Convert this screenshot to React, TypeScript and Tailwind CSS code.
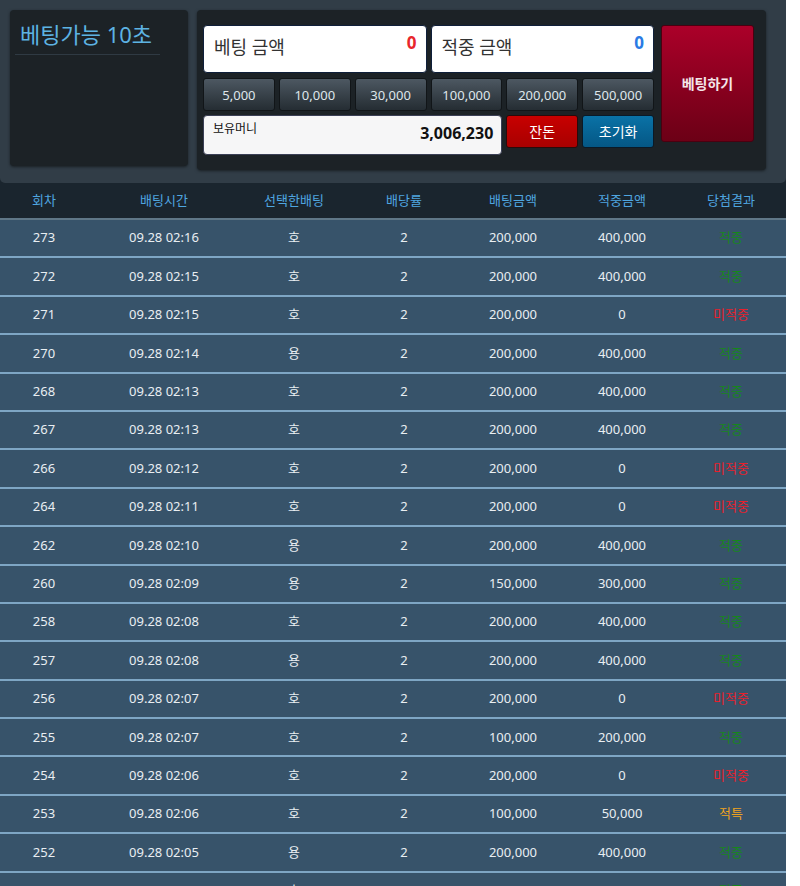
import React from 'react';

const rows: [string, string, string, string, string, string][] = [
  ['273', '09.28 02:16', '호', '200,000', '400,000', '적중'],
  ['272', '09.28 02:15', '호', '200,000', '400,000', '적중'],
  ['271', '09.28 02:15', '호', '200,000', '0', '미적중'],
  ['270', '09.28 02:14', '용', '200,000', '400,000', '적중'],
  ['268', '09.28 02:13', '호', '200,000', '400,000', '적중'],
  ['267', '09.28 02:13', '호', '200,000', '400,000', '적중'],
  ['266', '09.28 02:12', '호', '200,000', '0', '미적중'],
  ['264', '09.28 02:11', '호', '200,000', '0', '미적중'],
  ['262', '09.28 02:10', '용', '200,000', '400,000', '적중'],
  ['260', '09.28 02:09', '용', '150,000', '300,000', '적중'],
  ['258', '09.28 02:08', '호', '200,000', '400,000', '적중'],
  ['257', '09.28 02:08', '용', '200,000', '400,000', '적중'],
  ['256', '09.28 02:07', '호', '200,000', '0', '미적중'],
  ['255', '09.28 02:07', '호', '100,000', '200,000', '적중'],
  ['254', '09.28 02:06', '호', '200,000', '0', '미적중'],
  ['253', '09.28 02:06', '호', '100,000', '50,000', '적특'],
  ['252', '09.28 02:05', '용', '200,000', '400,000', '적중'],
  ['251', '09.28 02:05', '호', '200,000', '400,000', '적중'],
];

const chips = ['5,000', '10,000', '30,000', '100,000', '200,000', '500,000'];

const headers = ['회차', '배팅시간', '선택한배팅', '배당률', '배팅금액', '적중금액', '당첨결과'];
const widths = ['w-[88px]', 'w-[152px]', 'w-[108px]', 'w-[112px]', 'w-[106px]', 'w-[112px]', 'w-[106px]'];

const resultColor = (r: string) =>
  r === '적중' ? 'text-[#17861c]' : r === '미적중' ? 'text-[#e8202c]' : 'text-[#f0a41c]';

export default function App() {
  return (
    <div
      className="w-[786px] bg-[#1a252e] text-[13px] text-[#e9eef2]"
      style={{ fontFamily: '"Noto Sans", "Noto Sans CJK KR", sans-serif' }}
    >
      {/* top control panel */}
      <div className="flex gap-[9px] rounded-b-[5px] bg-[#313d47] pl-[10px] pt-[10px] pb-[13px] pr-[20px]">
        <div className="h-[156px] w-[178px] rounded-[4px] bg-[#1c2226] px-[5px] pt-[8px] shadow-[0_1px_3px_rgba(0,0,0,0.5)]">
          <div className="w-[145px] border-b border-[#2f3a43] px-[5px] pb-[4px] text-[22px] leading-[32px] text-[#5db3e3]">
            베팅가능 10초
          </div>
        </div>

        <div className="flex h-[160px] flex-1 gap-[7px] rounded-[4px] bg-[#1c2226] pl-[6px] pt-[15px] pr-[11px] shadow-[0_1px_3px_rgba(0,0,0,0.5)]">
          <div className="grid w-[451px] grid-cols-6 content-start gap-x-[4px] gap-y-[4px]">
            <div className="relative col-span-3 h-[48px] rounded-[4px] border border-[#0f1f3a] bg-white px-[10px] pt-[8px] text-[18px] text-[#333]">
              베팅 금액
              <span className="absolute right-[9px] top-[4px] text-[17px] font-bold text-[#e8262c]">0</span>
            </div>
            <div className="relative col-span-3 h-[48px] rounded-[4px] border border-[#0f1f3a] bg-white px-[10px] pt-[8px] text-[18px] text-[#333]">
              적중 금액
              <span className="absolute right-[9px] top-[4px] text-[17px] font-bold text-[#2a7be4]">0</span>
            </div>
            {chips.map((c) => (
              <button
                key={c}
                className="mt-[1px] h-[33px] rounded-[3px] border border-[#111518] bg-gradient-to-b from-[#4d5862] to-[#252d33] pt-[2px] text-[13px] text-[#dfe6eb]"
              >
                {c}
              </button>
            ))}
            <div className="col-span-4 flex h-[40px] justify-between rounded-[4px] border border-[#3a3f55] bg-[#f6f6f7] pl-[9px] pr-[8px] pt-[5px] text-[#111]">
              <span className="text-[12px] leading-[16px]">보유머니</span>
              <span className="pt-[2px] text-[16px] font-bold leading-[20px]">3,006,230</span>
            </div>
            <button className="h-[33px] rounded-[3px] border border-[#2a0a0a] bg-gradient-to-b from-[#c80000] to-[#a80000] text-[14px] text-white">
              잔돈
            </button>
            <button className="h-[33px] rounded-[3px] border border-[#0a1a28] bg-gradient-to-b from-[#0a72a6] to-[#055785] text-[14px] text-white">
              초기화
            </button>
          </div>
          <button className="h-[117px] w-[93px] rounded-[3px] border border-[#4a0010] bg-gradient-to-b from-[#ab0029] to-[#6c0016] text-[14px] font-bold text-[#f4e6ea]">
            베팅하기
          </button>
        </div>
      </div>

      {/* table */}
      <div className="mt-[1px] flex h-[36px] items-center border-b-2 border-[#5f7787] bg-[#1a252e] text-[#4fa6e0]">
        {headers.map((h, i) => (
          <div key={h} className={`${widths[i]} text-center`}>
            {h}
          </div>
        ))}
      </div>
      {rows.map((r) => (
        <div key={r[0]} className="flex h-[38.4px] items-center border-b-2 border-[#7ea6c4] bg-[#37536a]">
          <div className={`${widths[0]} text-center`}>{r[0]}</div>
          <div className={`${widths[1]} text-center`}>{r[1]}</div>
          <div className={`${widths[2]} text-center`}>{r[2]}</div>
          <div className={`${widths[3]} text-center`}>2</div>
          <div className={`${widths[4]} text-center`}>{r[3]}</div>
          <div className={`${widths[5]} text-center`}>{r[4]}</div>
          <div className={`${widths[6]} text-center ${resultColor(r[5])}`}>{r[5]}</div>
        </div>
      ))}
    </div>
  );
}
